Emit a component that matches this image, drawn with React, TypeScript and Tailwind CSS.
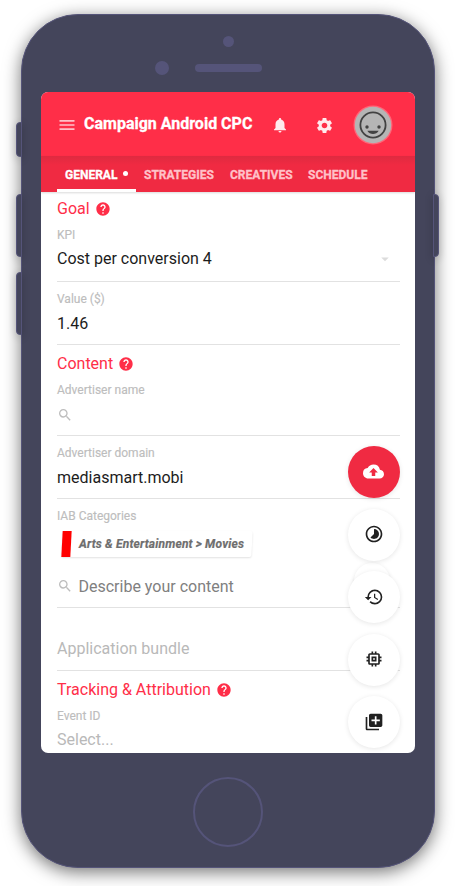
import type { ReactNode } from "react";
import {
  MdAddToPhotos,
  MdArrowDropDown,
  MdBackup,
  MdHelp,
  MdHistory,
  MdMemory,
  MdMenu,
  MdNotifications,
  MdSearch,
  MdSettings,
  MdTimelapse,
} from "react-icons/md";

function Heading({ children, className = "h-7 pt-[9px]" }: { children: ReactNode; className?: string }) {
  return (
    <h2 className={`flex items-start text-[16px] leading-5 text-[#ff2e48] ${className}`}>
      <span>{children}</span>
      <MdHelp className="mt-[2px] ml-[5px] size-4" />
    </h2>
  );
}

function Field({ label, children, className = "h-[63px]" }: { label: string; children: ReactNode; className?: string }) {
  return (
    <div className={`flex flex-col border-b border-[#e2e2e2] pt-[9px] ${className}`}>
      <span className="text-[12px] leading-4 text-[#bdbdbd] [-webkit-text-stroke:0.15px]">{label}</span>
      {children}
    </div>
  );
}

function Value({ children, className = "mt-[7px]" }: { children: ReactNode; className?: string }) {
  return (
    <div className={`flex items-center justify-between text-[16px] leading-5 text-[#1c1c1c] ${className}`}>
      {children}
    </div>
  );
}

function Fab({ children, className = "bg-white text-[#212121]" }: { children: ReactNode; className?: string }) {
  return (
    <button
      className={`relative flex size-[52px] items-center justify-center rounded-full pb-px text-[20px] shadow-[0_1px_5px_rgba(0,0,0,0.1)] ${className}`}
    >
      {children}
    </button>
  );
}

function SideButton({ className }: { className: string }) {
  return (
    <div
      className={`absolute w-[6px] border border-[#555479] bg-[#44455b] shadow-[0_2px_8px_rgba(0,0,0,0.2)] ${className}`}
    />
  );
}

function Smiley() {
  return (
    <svg viewBox="0 0 40 40" className="size-10">
      <circle cx="20" cy="20" r="19.5" fill="#ff6678" />
      <circle cx="20" cy="20" r="18.2" fill="#b5b5b5" />
      <circle cx="20" cy="20" r="12.6" fill="none" stroke="#424242" strokeWidth="1.8" />
      <circle cx="14" cy="22" r="1.7" fill="#424242" />
      <circle cx="26" cy="22" r="1.7" fill="#424242" />
      <path d="M14.3 25.7h11.4c-1.4 2.2-3.3 3.3-5.7 3.3s-4.300-1.100-5.700-3.300z" fill="#424242" />
    </svg>
  );
}

export default function App() {
  return (
    <div className="relative h-[886px] w-[455px] overflow-hidden bg-white pt-[14px] pl-[21px] font-['Roboto',sans-serif]">
      <div className="relative z-10 flex h-[854px] w-[413.500px] flex-col items-center rounded-[57px] border-[1.5px] border-[#555479] bg-[#44455b] shadow-[0_4px_17px_rgba(0,0,0,0.55)]">
        <div className="mt-[21px] ml-px size-[11px] rounded-full bg-[#555479]" />
        <div className="mt-[14px] flex h-[14px] w-full items-center pl-[133px]">
          <div className="size-[14px] rounded-full bg-[#555479]" />
          <div className="ml-[26px] h-2 w-[67px] rounded-full bg-[#555479]" />
        </div>

        <div className="relative mt-[17px] h-[661px] w-[373.500px] shrink-0 overflow-hidden rounded-[7px] bg-white">
          <header className="flex h-16 items-center bg-[#ff2e48] pl-4 text-white">
            <MdMenu className="mt-px size-[20px] opacity-70" />
            <h1 className="ml-[7px] w-[168px] text-[16px] font-bold whitespace-nowrap [-webkit-text-stroke:0.3px]">
              Campaign Android CPC
            </h1>
            <MdNotifications className="mt-[2px] ml-[19px] size-[18px] opacity-90" />
            <MdSettings className="mt-[2px] ml-[26px] size-[19px] opacity-90" />
            <div className="mt-[2px] ml-[19px]">
              <Smiley />
            </div>
          </header>
          <nav className="flex h-9 items-stretch bg-linear-to-b from-[#df2a40] via-[#f02a42] via-25% to-[#f02a42] pl-4 text-[12px] font-bold text-[#ffc1c8] shadow-[0_1px_2px_rgba(0,0,0,0.15)] [-webkit-text-stroke:0.3px]">
            <div className="flex w-[79px] items-center border-b-[3px] border-white pt-[4px] pl-2 text-white">
              GENERAL
              <span className="mb-[3px] ml-[6px] size-[5px] rounded-full bg-white" />
            </div>
            <div className="flex w-[86px] items-center pt-[1px] pl-2">STRATEGIES</div>
            <div className="flex w-[78px] items-center pt-[1px] pl-2">CREATIVES</div>
            <div className="flex items-center pt-[1px] pl-2">SCHEDULE</div>
          </nav>

          <main className="pr-[14.500px] pl-4">
            <Heading className="h-[26px] pt-[7px]">Goal</Heading>
            <Field label="KPI" className="h-16">
              <Value className="mt-[6px]">
                Cost per conversion 4
                <MdArrowDropDown className="mr-[6px] size-[18px] text-[#dcdcdc]" />
              </Value>
            </Field>
            <Field label="Value ($)">
              <Value>1.46</Value>
            </Field>
            <Heading>Content</Heading>
            <Field label="Advertiser name">
              <MdSearch className="mt-[9px] size-4 text-[#bdbdbd]" />
            </Field>
            <Field label="Advertiser domain">
              <Value>mediasmart.mobi</Value>
            </Field>
            <Field label="IAB Categories" className="h-[109px]">
              <div className="mt-[7px] ml-[4.500px] flex h-[26px] w-[190px] -skew-x-3 items-center rounded-[2px] bg-white shadow-[0_1px_2px_rgba(0,0,0,0.12)]">
                <span className="h-[26px] w-[8.500px] bg-[#ff0000]" />
                <span className="ml-2 skew-x-3 text-[12px] font-bold tracking-[0.17px] whitespace-nowrap text-[#6e6e6e] italic [-webkit-text-stroke:0.2px]">
                  Arts &amp; Entertainment &gt; Movies
                </span>
              </div>
              <div className="mt-5 flex items-center text-[16px] leading-5 text-[#808080]">
                <MdSearch className="mr-[5.500px] mb-[2px] size-4 text-[#bdbdbd]" />
                Describe your content
              </div>
            </Field>
            <div className="flex h-[63px] items-center border-b border-[#e2e2e2] text-[16px] text-[#b9b9b9]">
              <span className="mt-5">Application bundle</span>
            </div>
            <Heading>Tracking &amp; Attribution</Heading>
            <Field label="Event ID">
              <div className="mt-[6px] text-[16px] leading-5 text-[#b9b9b9]">Select...</div>
            </Field>
          </main>

          <div className="absolute top-[471px] left-[313px] size-9 rounded-full bg-white shadow-[0_1px_4px_rgba(0,0,0,0.1)]" />
          <div className="absolute top-[354px] left-[306.500px] flex flex-col gap-[10.500px]">
            <Fab className="bg-[#f02a42] text-white">
              <MdBackup className="size-[21px]" />
            </Fab>
            <Fab>
              <MdTimelapse />
            </Fab>
            <Fab>
              <MdHistory />
            </Fab>
            <Fab>
              <MdMemory />
            </Fab>
            <Fab>
              <MdAddToPhotos />
            </Fab>
          </div>
        </div>

        <div className="mt-[23.500px] ml-px size-[70px] shrink-0 rounded-full border-[2.500px] border-[#555479]" />
      </div>
      <SideButton className="top-[122px] left-4 z-10 h-[35px] rounded-l" />
      <SideButton className="top-[194px] left-4 z-10 h-[63px] rounded-l" />
      <SideButton className="top-[272px] left-4 z-10 h-[63px] rounded-l" />
      <SideButton className="top-[194px] left-[433px] z-10 h-[63px] rounded-r" />
    </div>
  );
}
